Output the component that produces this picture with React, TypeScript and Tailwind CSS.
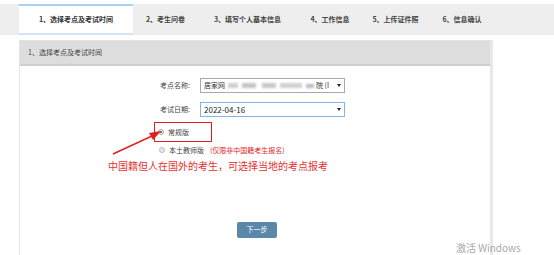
import React from 'react'

const tabs = [
  { label: '2、考生问卷', w: 'w-[65px]' },
  { label: '3、填写个人基本信息', w: 'w-[99px]' },
  { label: '4、工作信息', w: 'w-[66px]' },
  { label: '5、上传证件照', w: 'w-[65px]' },
  { label: '6、信息确认', w: 'w-[68px]' },
]

function Caret() {
  return <span className="ml-auto mr-[3px] h-0 w-0 border-x-[2px] border-t-[3px] border-x-transparent border-t-[#222]" />
}

export default function App() {
  return (
    <div
      className="relative h-[255px] w-[554px] overflow-hidden bg-white text-[#333]"
      style={{ fontFamily: '"Noto Sans CJK SC", "Noto Sans", sans-serif' }}
    >
      {/* step tabs */}
      <div className="mt-[4px] flex h-[31px] items-stretch bg-[#eeeeee] pl-[19px]">
        <div className="flex w-[114px] items-center justify-center border-y-2 border-t-[#a9d3f5] border-b-[#cfe6f9] bg-white text-[7px] font-bold text-[#333]">
          1、选择考点及考试时间
        </div>
        {tabs.map((t) => (
          <div key={t.label} className={`flex ${t.w} items-center justify-center text-[7px] font-bold text-[#444]`}>
            {t.label}
          </div>
        ))}
      </div>

      {/* panel */}
      <div className="ml-[19px] mt-[5px] h-[300px] w-[474px] border border-r-[3px] border-[#e4e4e4] border-r-[#e8e8e8]">
        <div className="flex h-[25px] items-center border-b-2 border-[#cfcfcf] bg-[#dddddd] pl-[8px] text-[7px] text-[#444]">
          1、选择考点及考试时间
        </div>

        <div className="pt-[12px]">
          <div className="flex items-center">
            <div className="w-[170px] text-right text-[7px] text-[#444]">考点名称:</div>
            <div className="ml-[10px] flex h-[15px] w-[145px] items-center border border-[#a9a9a9] pl-[3px] text-[7px] text-[#333]">
              <span>居家网</span>
              <span className="ml-[3px] h-[5px] w-[10px] bg-[#cfcfcf] blur-[1px]" />
              <span className="ml-[4px] h-[5px] w-[14px] bg-[#c4c4c4] blur-[1px]" />
              <span className="ml-[6px] h-[5px] w-[14px] bg-[#c8c8c8] blur-[1px]" />
              <span className="ml-[4px] h-[5px] w-[22px] bg-[#d0d0d0] blur-[1px]" />
              <span className="ml-[4px] h-[4px] w-[8px] bg-[#bbb] blur-[1px]" />
              <span className="ml-[2px]">院 (I</span>
              <Caret />
            </div>
          </div>

          <div className="mt-[9px] flex items-center">
            <div className="w-[170px] text-right text-[7px] text-[#444]">考试日期:</div>
            <div className="ml-[10px] flex h-[15px] w-[145px] items-center border border-[#80b6ea] pl-[3px] text-[8px] text-[#222]">
              <span>2022-04-16</span>
              <Caret />
            </div>
          </div>

          <div className="ml-[134px] mt-[5px] flex h-[20px] w-[58px] items-center border-[1.5px] border-[#e02020] pl-[3px]">
            <span className="flex h-[6px] w-[6px] items-center justify-center rounded-full border border-[#aaa] bg-[#eee]">
              <span className="h-[2px] w-[2px] rounded-full bg-[#555]" />
            </span>
            <span className="ml-[4px] text-[7px] text-[#444]">常规版</span>
          </div>

          <div className="ml-[139px] mt-[3px] flex items-center">
            <span className="h-[6px] w-[6px] rounded-full border border-[#bbb] bg-[#e8e8e8]" />
            <span className="ml-[4px] text-[7px] text-[#444]">本土教师版</span>
            <span className="ml-[6px] text-[7px] text-[#e02828]">(仅限非中国籍考生报名)</span>
          </div>

          <div className="ml-[88px] mt-[3px] text-[10px] leading-[14px] text-[#e83030]">
            中国籍但人在国外的考生，可选择当地的考点报考
          </div>

          <div className="ml-[217px] mt-[49px] flex h-[16px] w-[40px] items-center justify-center rounded-[2px] bg-[#5b87a8] text-[7px] text-white">
            下一步
          </div>
        </div>
      </div>

      {/* annotation arrow */}
      <svg className="absolute left-0 top-0" width="554" height="255">
        <line x1="113" y1="154" x2="152" y2="136" stroke="#e02020" strokeWidth="1.4" />
        <polygon points="161,131 149,133 153,140" fill="#e02020" />
      </svg>

      <div className="absolute left-[456px] top-[241px] text-[10px] leading-[14px] text-[#aaa]">
        激活 Windows
      </div>
    </div>
  )
}
